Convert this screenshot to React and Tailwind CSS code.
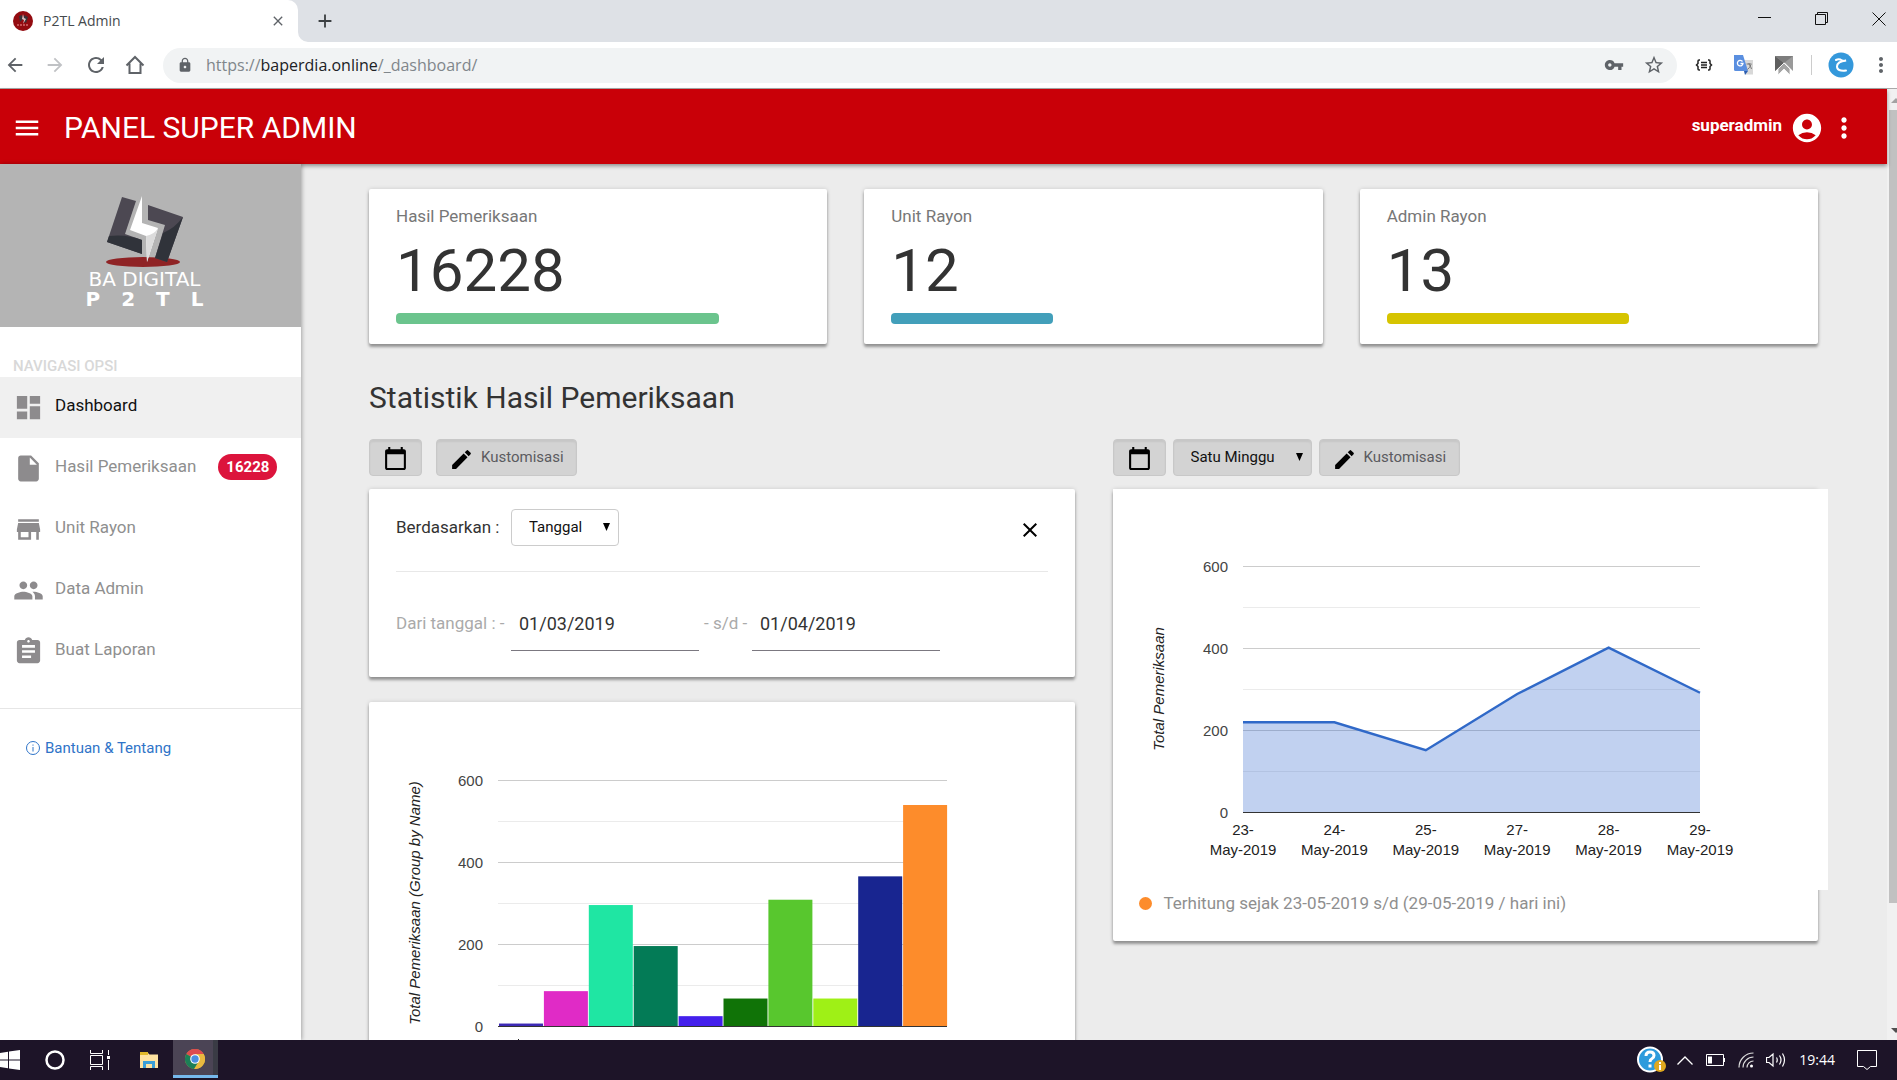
import React, { useState } from "react";
import {
  MdMenu,
  MdDashboard,
  MdInsertDriveFile,
  MdStore,
  MdPeople,
  MdAssignment,
  MdAccountCircle,
  MdMoreVert,
  MdCalendarToday,
  MdEdit,
  MdClose,
  MdArrowBack,
  MdArrowForward,
  MdRefresh,
  MdLock,
  MdVpnKey,
  MdStarBorder,
  MdAdd,
} from "react-icons/md";

const menus = [
  { label: "Dashboard", Icon: MdDashboard, active: true },
  { label: "Hasil Pemeriksaan", Icon: MdInsertDriveFile, badge: "16228" },
  { label: "Unit Rayon", Icon: MdStore },
  { label: "Data Admin", Icon: MdPeople },
  { label: "Buat Laporan", Icon: MdAssignment },
];

const stats = [
  { label: "Hasil Pemeriksaan", value: "16228", bar: "w-4/5 bg-[#6bc48d]" },
  { label: "Unit Rayon", value: "12", bar: "w-2/5 bg-[#429fba]" },
  { label: "Admin Rayon", value: "13", bar: "w-3/5 bg-[#d6c400]" },
];

const rayonBars = [
  { total: 6, color: "#3d2ab5" },
  { total: 85, color: "#e02bc6" },
  { total: 295, color: "#1fe6a3" },
  { total: 195, color: "#037b56" },
  { total: 24, color: "#4420ec" },
  { total: 67, color: "#107307" },
  { total: 308, color: "#58c72e" },
  { total: 67, color: "#9ff016" },
  { total: 365, color: "#182590" },
  { total: 539, color: "#fd8c2b" },
];

const weekly = [
  { day: "23-", total: 220 },
  { day: "24-", total: 220 },
  { day: "25-", total: 152 },
  { day: "27-", total: 289 },
  { day: "28-", total: 402 },
  { day: "29-", total: 292 },
];

const cardClass = "rounded-[2px] bg-white shadow-[0_3px_3px_rgba(0,0,0,0.35),0_0_4px_rgba(0,0,0,0.15)]";
const greyButton =
  "h-[37px] rounded-[4px] border border-[#c8c8c8] bg-[#d3d3d3] shadow-[inset_0_2px_2px_rgba(0,0,0,0.06)]";

function BrowserTabs() {
  return (
    <div className="flex h-[42px] shrink-0 items-stretch bg-[#dee1e6]">
      <div className="relative flex w-[298px] items-center rounded-tr-[10px] bg-white pl-[13px] pr-[12px]">
        <svg viewBox="0 0 20 20" className="h-5 w-5">
          <circle cx="10" cy="10" r="10" fill="#930b10" />
          <path d="M6 5l3-1 1 4-3 3zM11 4l4 2-2 6-2-1z" fill="#3a3238" />
          <path d="M10 3l-1 5 2 1-1 4 3-5-2-1z" fill="#d9c4c4" />
          <path d="M4 14h12" stroke="#d46a6a" strokeWidth="1.5" strokeDasharray="2 1" />
        </svg>
        <span className="ml-[10px] flex-1 text-sm text-[#45494d]">P2TL Admin</span>
        <button aria-label="Close tab" className="text-[#5f6368]">
          <MdClose size={16} />
        </button>
        <svg viewBox="0 0 10 10" className="absolute -right-[10px] bottom-0 h-[10px] w-[10px]">
          <path d="M0 0a10 10 0 0 0 10 10H0z" fill="#fff" />
        </svg>
      </div>
      <button aria-label="New tab" className="ml-4 text-[#3c4043]">
        <MdAdd size={22} />
      </button>
      <div className="ml-auto flex items-start gap-[43px] pr-[11px] pt-3">
        <svg viewBox="0 0 14 14" className="h-[14px] w-[14px]" stroke="#111" fill="none">
          <path d="M0 5.5h13" />
        </svg>
        <svg viewBox="0 0 14 14" className="h-[14px] w-[14px]" stroke="#111" fill="none">
          <path d="M.5 2.5h10v10H.5zM2.500 2.500v-2h10v10h-2" />
        </svg>
        <svg viewBox="0 0 14 14" className="h-[14px] w-[14px]" stroke="#111" fill="none">
          <path d="M.5.5l13 13M13.500.5l-13 13" />
        </svg>
      </div>
    </div>
  );
}

function AddressBar() {
  return (
    <div className="flex h-[47px] shrink-0 items-center border-b border-[#a9a9a9] bg-white pl-1 pr-1 text-[#5f6368]">
      <button aria-label="Back" className="flex w-10">
        <MdArrowBack size={22} />
      </button>
      <button aria-label="Forward" className="flex w-10 text-[#c0c2c5]">
        <MdArrowForward size={22} />
      </button>
      <button aria-label="Reload" className="flex w-10">
        <MdRefresh size={24} />
      </button>
      <button aria-label="Home" className="flex w-[39px]">
        <svg viewBox="0 0 22 22" className="h-[22px] w-[22px]" fill="none" stroke="currentColor" strokeWidth="2">
          <path d="M2.500 11.500L11 3l8.500 8.500M5.500 9.500V19h11V9.500" />
        </svg>
      </button>
      <div className="flex h-[35px] flex-1 items-center rounded-full bg-[#f1f3f4] pl-[14px] pr-3">
        <MdLock size={16} />
        <div className="ml-[13px] flex-1 text-base text-[#80868b]">
          https://<span className="text-[#202124]">baperdia.online</span>/_dashboard/
        </div>
        <MdVpnKey size={20} className="mr-[19px]" />
        <MdStarBorder size={22} />
      </div>
      <svg viewBox="0 0 18 12" className="ml-[18px] h-3 w-[18px]" fill="none" stroke="#222" strokeWidth="1.500">
        <path d="M5 1H4Q3 1 3 2v2.500L1.500 6 3 7.500V10q0 1 1 1h1M13 1h1q1 0 1 1v2.500L16.500 6 15 7.500V10q0 1-1 1h-1M6 3.500h6M6 6h6M6 8.500h6" />
      </svg>
      <svg viewBox="0 0 20 20" className="ml-[21px] h-5 w-5">
        <path d="M8 5h11v14.500h-8z" fill="#d8d8d8" />
        <path d="M0 0h9l5 16H1.500A1.500 1.500 0 0 1 0 14.500z" fill="#5a8fe0" />
        <path d="M10 16h4l-3 4z" fill="#2b5db0" />
        <path d="M8.500 6.500A2.800 2.800 0 1 0 9 8.500H6.500" stroke="#fff" strokeWidth="1.300" fill="none" />
        <path d="M12.500 9h5M15 8v1q2 3 2.500 5M17 9.500q-1 3-3.500 5" stroke="#777" fill="none" />
      </svg>
      <svg viewBox="0 0 18 19" className="ml-[21px] h-[19px] w-[18px]">
        <path d="M0 0h18v15L9 6 0 15z" fill="#9a9a9a" />
        <path d="M0 0l9 7-9 8z" fill="#5f5f5f" />
        <path d="M0 0h18L9 7z" fill="#7d7d7d" />
        <path d="M9 7l6 6v6l-6-6-6 6v-6z" fill="#a5a5a5" stroke="#fff" strokeWidth=".8" />
      </svg>
      <div className="mr-4 ml-[18px] h-5 w-px bg-[#ccc]" />
      <svg viewBox="0 0 26 26" className="h-[26px] w-[26px]">
        <circle cx="13" cy="13" r="12.500" fill="#3498db" />
        <path d="M8 8q3-1.500 6 .500 2 .8 4 0-9 1-9 6t9 4" stroke="#fff" strokeWidth="2" fill="none" strokeLinecap="round" />
      </svg>
      <button aria-label="Browser menu" className="ml-[15px]">
        <MdMoreVert size={24} />
      </button>
    </div>
  );
}

function Logo() {
  return (
    <div className="flex h-[163px] flex-col items-center bg-[#b4b4b4] pt-8 pr-3 text-white">
      <svg viewBox="0 0 78 71" className="h-[71px] w-[78px]">
        <ellipse cx="37" cy="66" rx="37" ry="5" fill="#8f2325" />
        <path d="M16 1l14 4-11 33 17 6v14L1 46z" fill="#4c4852" />
        <path d="M3 40q18-2 33 4v14L1 46z" fill="#30333a" />
        <path d="M42 9l35 12-16 45-12-4 10-33-17-5z" fill="#4c4852" />
        <path d="M77 21L61 66l-12-4 8-25q12-5 20-16z" fill="#30333a" />
        <path d="M36 0v27l16 5-11 34-1-26-16-6z" fill="#fff" />
        <path d="M40 40q9-2 12-8L41 66z" fill="#dcdcdc" />
      </svg>
      <div className="mt-1 font-['DejaVu_Sans'] text-xl leading-4">BA DIGITAL</div>
      <div className="mt-[2px] flex w-[118px] justify-between font-['DejaVu_Sans'] text-xl leading-5 font-bold">
        <span>P</span>
        <span>2</span>
        <span>T</span>
        <span>L</span>
      </div>
    </div>
  );
}

function Sidebar() {
  return (
    <aside className="relative z-10 w-[301px] shrink-0 bg-white shadow-[1px_0_4px_rgba(0,0,0,0.3)]">
      <Logo />
      <div className="flex h-[50px] items-end pl-[13px] text-[15px] font-medium text-[#d8d8d8]">NAVIGASI OPSI</div>
      <nav className="border-b border-[#e6e6e6] pb-[26px]">
        {menus.map(({ label, Icon, active, badge }) => (
          <a
            key={label}
            href="#"
            className={`flex h-[61px] items-center pl-[13px] text-[17px] ${active ? "bg-[#f0f0f0] text-[#111]" : "text-[#8f8f8f]"}`}
          >
            <Icon size={31} className="mr-[11px] text-[#8d8b8d]" />
            <span className="pb-[3px]">{label}</span>
            {badge && (
              <span className="mb-1 ml-[22px] rounded-full bg-[#dc143c] px-2 text-[15px] leading-[26px] font-bold text-white">
                {badge}
              </span>
            )}
          </a>
        ))}
      </nav>
      <a href="#" className="mt-7 flex items-center pl-[26px] text-[15px] text-[#2f74c8]">
        <svg viewBox="0 0 14 14" className="mr-[5px] h-[14px] w-[14px]" fill="none" stroke="currentColor">
          <circle cx="7" cy="7" r="6.500" />
          <path d="M7 6v4.500M7 3.500v1.200" />
        </svg>
        Bantuan &amp; Tentang
      </a>
    </aside>
  );
}

// y axis lines shared by both charts, 600 on top and 0 at the bottom
function Grid({ x, width, top }) {
  return (
    <g>
      {[0, 1, 2, 3, 4, 5].map((n) => (
        <rect key={n} x={x} y={top + n * 41} width={width} height="1" fill={n % 2 ? "#ebebeb" : "#ccc"} />
      ))}
      {[600, 400, 200, 0].map((v, n) => (
        <text key={v} x={x - 15} y={top + 6 + n * 82} textAnchor="end" fill="#444">
          {v}
        </text>
      ))}
    </g>
  );
}

function BarChart() {
  const top = 78;
  const base = top + 246;
  return (
    <svg width="705" height="400" className="block font-['Liberation_Sans'] text-[15px]">
      <Grid x={129} width={449} top={top} />
      {rayonBars.map((b, i) => {
        const h = b.total * 0.41;
        return <rect key={i} x={130 + i * 44.9} y={base - h} width="44" height={h} fill={b.color} />;
      })}
      <rect x="129" y={base} width="449" height="1" fill="#333" />
      <path d="M149.500 337v4" stroke="#222" />
      <text transform="translate(51 201) rotate(-90)" textAnchor="middle" fontStyle="italic" fill="#222">
        Total Pemeriksaan (Group by Name)
      </text>
    </svg>
  );
}

function AreaChart() {
  const top = 77;
  const base = top + 246;
  const points = weekly.map((d, i) => `${130 + i * 91.4},${base - d.total * 0.41 + 0.5}`).join(" ");
  return (
    <svg width="715" height="401" className="mt-px block bg-white font-['Liberation_Sans'] text-[15px]">
      <Grid x={130} width={457} top={top} />
      <polygon points={`130,${base} ${points} 587,${base}`} fill="#3366cc" fillOpacity="0.3" />
      <polyline points={points} fill="none" stroke="#3069c8" strokeWidth="2.400" />
      <rect x="130" y={base} width="457" height="1" fill="#333" />
      {weekly.map((d, i) => (
        <g key={d.day} textAnchor="middle" fill="#222">
          <text x={130 + i * 91.4} y="346">{d.day}</text>
          <text x={130 + i * 91.4} y="366">May-2019</text>
        </g>
      ))}
      <text transform="translate(51 200) rotate(-90)" textAnchor="middle" fontStyle="italic" fill="#222">
        Total Pemeriksaan
      </text>
    </svg>
  );
}

function SelectBox({ id, label, options, className }) {
  return (
    <div className="relative">
      <select id={id} aria-label={label} className={`appearance-none pl-[17px] text-[15px] text-[#111] ${className}`}>
        {options.map((o) => (
          <option key={o}>{o}</option>
        ))}
      </select>
      <svg viewBox="0 0 7 8" className="pointer-events-none absolute top-[14px] right-[9px] h-2 w-[7px]">
        <path d="M0 0h7L3.500 8z" />
      </svg>
    </div>
  );
}

function CustomButton() {
  return (
    <button className={`${greyButton} flex w-[141px] items-center pl-3 text-[15px] text-[#5b5b60]`}>
      <MdEdit size={25} className="mt-1 mr-[7px] text-black" />
      Kustomisasi
    </button>
  );
}

function CalendarButton() {
  return (
    <button aria-label="Kalender" className={`${greyButton} flex w-[53px] items-center justify-center pt-[2px]`}>
      <MdCalendarToday size={25} />
    </button>
  );
}

function FilterCard({ onClose }) {
  const [from, setFrom] = useState("01/03/2019");
  const [to, setTo] = useState("01/04/2019");
  const inputClass = "h-[52px] w-[188px] border-b border-[#7b7880] bg-transparent px-2 pb-[2px] text-lg text-[#333] outline-none";

  return (
    <div className={`${cardClass} h-[188px] px-[27px] pt-5`}>
      <div className="flex items-center border-b border-[#e8e8e8] pb-[25px]">
        <label htmlFor="berdasarkan" className="w-[115px] text-[17px] text-[#333]">
          Berdasarkan :
        </label>
        <SelectBox
          id="berdasarkan"
          label="Berdasarkan"
          options={["Tanggal", "Bulan"]}
          className="h-[37px] w-[108px] rounded-[4px] border border-[#ccc] bg-white"
        />
        <button aria-label="Tutup" className="mt-1 mr-[6px] ml-auto" onClick={onClose}>
          <MdClose size={24} />
        </button>
      </div>
      <div className="mt-[27px] flex items-center text-[17px] text-[#aaa]">
        <label htmlFor="dari" className="w-[115px] pb-[2px] whitespace-nowrap">
          Dari tanggal : -
        </label>
        <input id="dari" className={inputClass} value={from} onChange={(e) => setFrom(e.target.value)} />
        <label htmlFor="sampai" className="w-[53px] pb-[2px] pl-[5px] whitespace-nowrap">
          - s/d -
        </label>
        <input id="sampai" className={inputClass} value={to} onChange={(e) => setTo(e.target.value)} />
      </div>
    </div>
  );
}

function Taskbar() {
  return (
    <footer className="relative z-20 flex h-10 shrink-0 items-center bg-[#1d1428] text-white">
      <svg viewBox="0 0 20 20" className="h-5 w-5" fill="#fff">
        <path d="M0 3l8-1.200v7.700H0zM9 1.600L20 0v9.500H9zM0 10.500h8v7.700L0 17zM9 10.500h11V20L9 18.400z" />
      </svg>
      <svg viewBox="0 0 20 20" className="ml-[25px] h-5 w-5">
        <circle cx="10" cy="10" r="8.500" fill="none" stroke="#fff" strokeWidth="2.500" />
      </svg>
      <svg viewBox="0 0 20 20" className="ml-[25px] h-5 w-5" fill="none" stroke="#fff">
        <path d="M.5 0v3.500h12V0M.5 5.500h12v9H.5zM.5 20v-3.500h12V20M18.500 0v5M18.500 10v10" />
        <path d="M17 6h3v3h-3z" fill="#fff" stroke="none" />
      </svg>
      <svg viewBox="0 0 18 17" className="ml-[30px] h-[17px] w-[18px]">
        <path d="M0 1h8l1.500 1.500H18V16H0z" fill="#fde2a0" />
        <path d="M0 0h8v3H0z" fill="#e0b82a" />
        <path d="M3 16V9h12v7h-3v-4H6v4z" fill="#3b9fd8" />
      </svg>
      <div className="ml-[15px] flex h-full w-[45px] flex-col pb-[2px]">
        <div className="flex flex-1 items-center border-r-[5px] border-[#3a3b45] bg-[#4b4455] pt-[2px] pl-3">
          <svg viewBox="0 0 20 20" className="h-5 w-5">
            <circle cx="10" cy="10" r="10" fill="#e9b93f" />
            <path d="M10 10L1.300 5A10 10 0 0 1 18.700 5H10z" fill="#dd4c4e" />
            <path d="M1.300 5A10 10 0 0 0 9 20l5-8-4-2z" fill="#1c7f57" />
            <path d="M10 5h8.700a10 10 0 0 1-9.200 15l5-8z" fill="#e9b93f" />
            <circle cx="10" cy="10" r="4.800" fill="#fff" />
            <circle cx="10" cy="10" r="3.700" fill="#4a8fe0" />
          </svg>
        </div>
        <div className="h-[3px] bg-[#76b9ed]" />
      </div>
      <div className="ml-auto flex items-center pr-5">
        <svg viewBox="0 0 30 28" className="h-7 w-[30px]">
          <circle cx="13" cy="13.500" r="12" fill="#2d9bdc" stroke="#fff" strokeWidth="2" />
          <path d="M9 10q0-4 4-4t4 3.500q0 2-2.200 3.300-1.800 1-1.800 3.200M13 18.500v3" stroke="#fff" strokeWidth="3" fill="none" />
          <circle cx="23" cy="20" r="6" fill="#e0a81e" />
          <path d="M23 16v2M23 19v5" stroke="#fff" strokeWidth="2" />
        </svg>
        <svg viewBox="0 0 16 9" className="ml-[10px] h-[9px] w-4" fill="none" stroke="#fff" strokeWidth="1.300">
          <path d="M.5 8.500L8 1l7.500 7.500" />
        </svg>
        <svg viewBox="0 0 20 12" className="ml-[13px] h-3 w-5" fill="none" stroke="#fff">
          <path d="M.5.5h17v11H.5zM18.500 4v4" />
          <path d="M2 2.500h4v7H2z" fill="#fff" stroke="none" />
        </svg>
        <svg viewBox="0 0 16 16" className="ml-3 h-4 w-4" fill="none" stroke="#ddd" strokeWidth="1.200">
          <path d="M1 15.500A14.500 14.500 0 0 1 15.500 1M5 15.500A10.500 10.500 0 0 1 15.500 5M9 15.500A6.500 6.500 0 0 1 15.500 9" />
          <circle cx="13.500" cy="14" r="1.500" fill="#fff" stroke="none" />
        </svg>
        <svg viewBox="0 0 20 16" className="ml-3 h-4 w-5" fill="none" stroke="#fff" strokeWidth="1.200">
          <path d="M.5 5.500H3L7 2v12l-4-3.500H.5zM10.500 5.500q1.500 2.500 0 5M13.500 3.500q3 4.500 0 9M16.500 1.500q4 6.500 0 13" />
        </svg>
        <span className="ml-[13px] text-sm whitespace-nowrap">19:44</span>
        <svg viewBox="0 0 20 20" className="ml-[22px] h-5 w-5" fill="none" stroke="#fff">
          <path d="M.5.5h19v16h-6l-3.500 3-3.500-3h-6z" />
        </svg>
      </div>
    </footer>
  );
}

export default function App() {
  const [showFilter, setShowFilter] = useState(true);

  return (
    <div className="flex h-screen flex-col overflow-hidden font-['Open_Sans',sans-serif]">
      <BrowserTabs />
      <AddressBar />
      <div className="flex min-h-0 flex-1 bg-[#f1f1f1] font-['Roboto',sans-serif]">
        <div className="flex min-w-0 flex-1 flex-col">
          <header className="z-10 flex h-[75px] shrink-0 items-center bg-[#c90008] pt-[2px] pr-[27px] pl-3 text-white shadow-[0_2px_4px_rgba(0,0,0,0.4)]">
            <button aria-label="Menu">
              <MdMenu size={30} />
            </button>
            <h1 className="ml-[22px] text-3xl">PANEL SUPER ADMIN</h1>
            <span className="mr-2 mb-1 ml-auto text-[17px] font-bold">superadmin</span>
            <MdAccountCircle size={34} />
            <button aria-label="Opsi" className="ml-1">
              <MdMoreVert size={32} />
            </button>
          </header>

          <div className="flex min-h-0 flex-1 bg-[#ececec]">
            <Sidebar />
            <main className="min-w-0 flex-1 overflow-hidden pt-[25px] pr-[69px] pl-[68px]">
              {/* Ringkasan */}
              <section className="grid grid-cols-3 gap-[37px]">
                {stats.map((s) => (
                  <div key={s.label} className={`${cardClass} h-[155px] px-[27px] pt-[13px]`}>
                    <p className="text-[17px] leading-7 text-[#777]">{s.label}</p>
                    <p className="text-6xl leading-[82px] text-[#333]">{s.value}</p>
                    <div className={`mt-px h-[11px] rounded-[4px] ${s.bar}`} />
                  </div>
                ))}
              </section>

              <h2 className="mt-9 text-3xl text-[#333]">Statistik Hasil Pemeriksaan</h2>

              <section className="mt-[23px] grid grid-cols-2 gap-[38px]">
                {/* Grafik per rayon */}
                <div>
                  <div className="mb-[13px] flex gap-[14px]">
                    <CalendarButton />
                    <CustomButton />
                  </div>
                  {showFilter && <FilterCard onClose={() => setShowFilter(false)} />}
                  <div className={`${cardClass} mt-[25px]`}>
                    <BarChart />
                  </div>
                </div>

                {/* Grafik mingguan */}
                <div>
                  <div className="mb-[13px] flex gap-[7px]">
                    <CalendarButton />
                    <SelectBox
                      id="periode"
                      label="Periode"
                      options={["Satu Minggu", "Satu Bulan"]}
                      className={`${greyButton} w-[139px]`}
                    />
                    <CustomButton />
                  </div>
                  <div className={`${cardClass} h-[452px]`}>
                    <AreaChart />
                    <div className="flex items-center pt-px pl-[26px] text-[17px] leading-6 text-[#8f8f8f]">
                      <span className="mr-3 h-[13px] w-[13px] rounded-full bg-[#fd8c2b]" />
                      Terhitung sejak 23-05-2019 s/d (29-05-2019 / hari ini)
                    </div>
                  </div>
                </div>
              </section>
            </main>
          </div>
        </div>
        {/* Scrollbar */}
        <div className="flex w-[10px] shrink-0 flex-col items-end overflow-hidden">
          <svg viewBox="0 0 8 21" className="h-[21px] w-2">
            <path d="M2 14l5-5 5 5z" fill="#a3a3a3" />
          </svg>
          <div className="h-5/6 w-2 bg-[#c1c1c1]" />
          <svg viewBox="0 0 8 21" className="mt-auto h-[21px] w-2">
            <path d="M2 9l5 5 5-5z" fill="#505050" />
          </svg>
        </div>
      </div>
      <Taskbar />
    </div>
  );
}
